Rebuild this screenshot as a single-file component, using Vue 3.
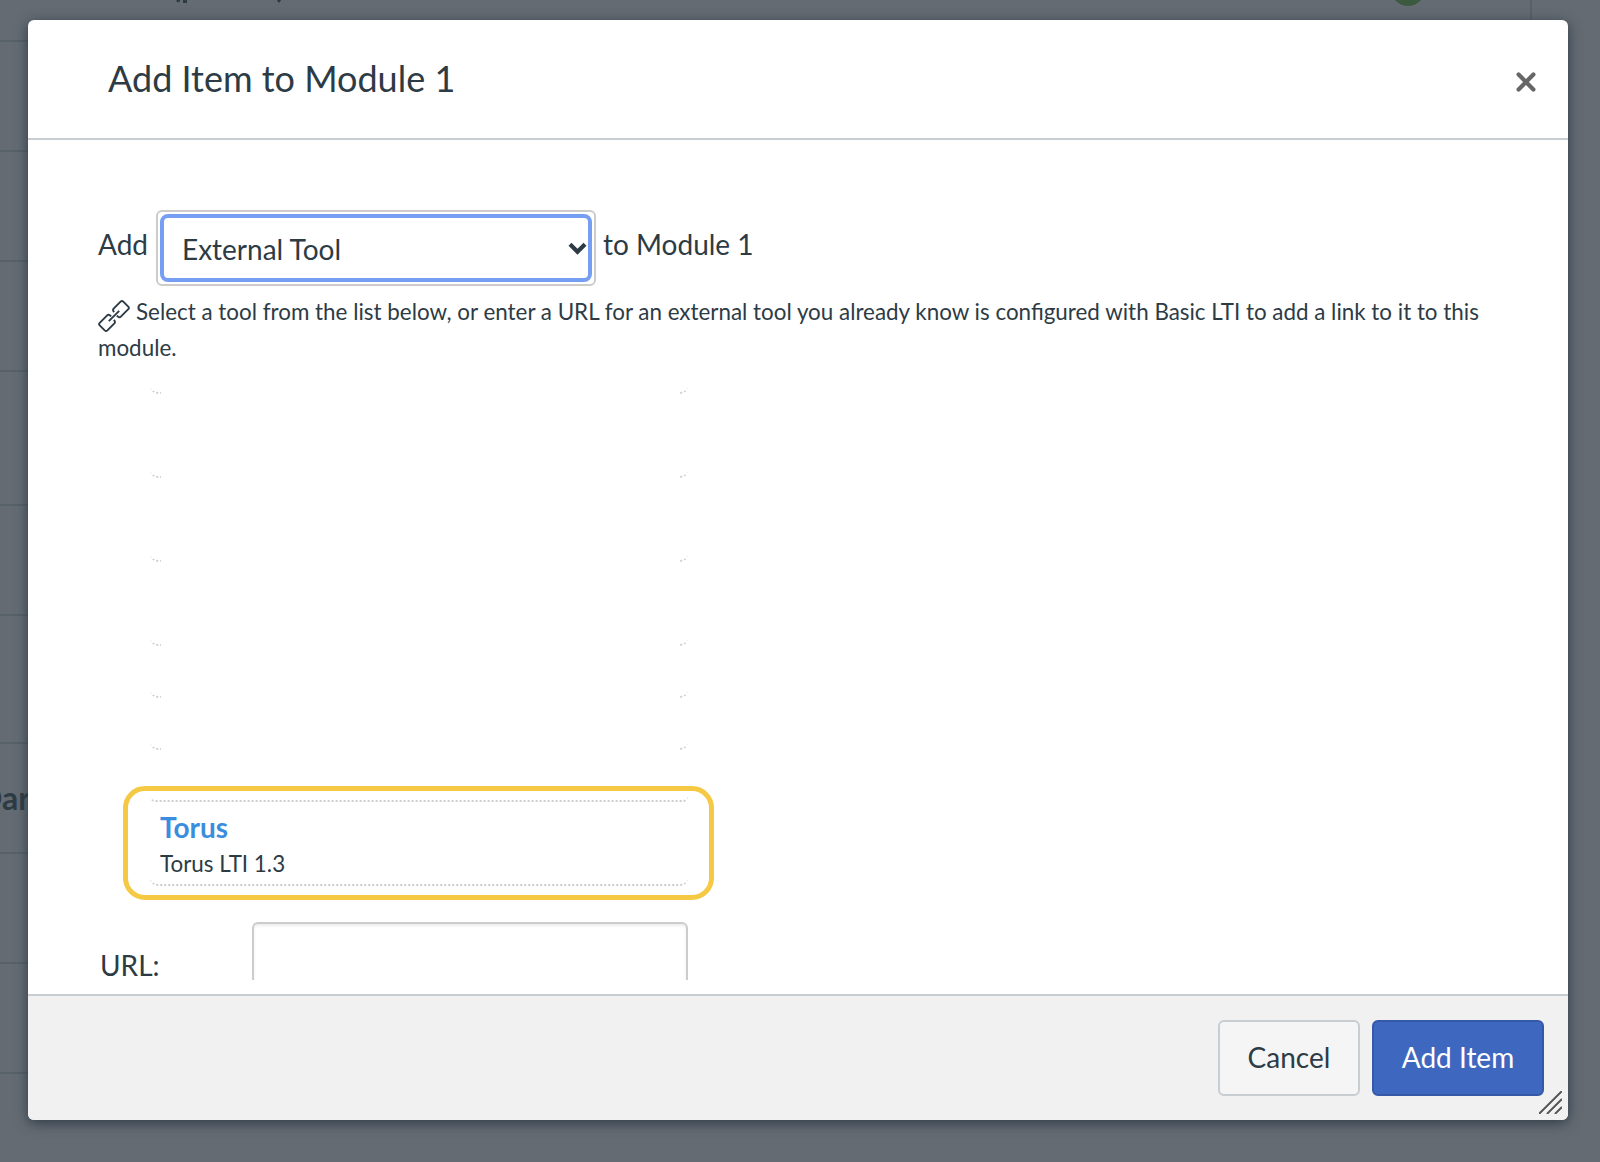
<script setup>
const courseRows = [
  { height: 42, marks: true },
  { height: 110 },
  { height: 110 },
  { height: 110 },
  { height: 134 },
  { height: 110 },
  { height: 128 },
  { height: 110, label: 'Dar' },
  { height: 110 },
  { height: 110 },
]
const emptyTools = [28, 84, 84, 84, 52, 52]
</script>

<template>
  <div class="page">
    <div class="course">
      <div v-for="(row, i) in courseRows" :key="i" class="course-row" :style="{ height: row.height + 'px' }">
        <span v-if="row.label" class="course-label">{{ row.label }}</span>
        <svg v-if="row.marks" class="marks" width="1600" height="20" viewBox="0 0 1600 20">
          <path d="M176.500 0h3.500v1.500q-2 1.500-3.500 0zM183 0h4v3h-4zM277 0h4l-1 2q-1 1-2 0z" fill="#2d3b45" />
          <circle cx="1408" cy="-11" r="17" fill="#3b5a40" />
          <path d="M1531 0v20" stroke="#566168" stroke-width="2" />
        </svg>
      </div>
    </div>

    <div class="overlay">
      <section class="dialog" role="dialog" aria-label="Add Item to Module 1">
        <header class="head">
          <h1>Add Item to Module 1</h1>
          <button class="close" aria-label="Close">
            <svg width="20" height="20" viewBox="0 0 20 20"><path d="M2.600 2.600 17.400 17.400M17.400 2.600 2.600 17.400" stroke="#666" stroke-width="4.200" stroke-linecap="round" /></svg>
          </button>
        </header>

        <div class="body">
          <div class="picker">
            <span class="before">Add</span>
            <div class="select">
              <div class="ring">
                <span>External Tool</span>
                <svg width="20" height="14" viewBox="0 0 20 14"><path d="M2 2.300l7.500 7.400L17 2.300" fill="none" stroke="#2d3b45" stroke-width="4.200" /></svg>
              </div>
            </div>
            <span class="after">to Module 1</span>
          </div>

          <p class="hint">
            <svg class="link" width="32" height="32" viewBox="0 0 32 32" fill="none" stroke="#2d3b45" stroke-width="1.900" stroke-linejoin="round">
              <path d="M18.800 15.600l1.400 1.200q1.300 1 2.600-.1l7.500-7.500q1.200-1.300 0-2.600L25.300 1.600q-1.400-1.200-2.700 0l-7 7q-1 1.200-.2 2.500l.7 1" />
              <path d="M13.200 16.400l-1.400-1.200q-1.300-1-2.600.1l-7.500 7.500q-1.200 1.300 0 2.600l5 5q1.400 1.200 2.700 0l7-7q1-1.200.2-2.500l-.7-1" />
              <path d="M10.800 21.200l10.400-10.400" />
            </svg><span>Select a tool from the list below, or enter a URL for an external tool you already know is configured with Basic LTI to add a link to it to this module.</span>
          </p>

          <ul class="tools">
            <li v-for="(h, i) in emptyTools" :key="i" class="tool empty" :style="{ height: h + 'px' }"></li>
            <li class="featured">
              <div class="tool edge"></div>
              <div class="tool torus">
                <a>Torus</a>
                <span>Torus LTI 1.3</span>
              </div>
            </li>
          </ul>

          <div class="url">
            <label for="url">URL:</label>
            <input id="url" type="text" />
          </div>
        </div>

        <footer class="foot">
          <button class="btn">Cancel</button>
          <button class="btn primary">Add Item</button>
          <svg class="grip" width="23" height="23" viewBox="0 0 23 23" stroke="#fff" stroke-width="1.500">
            <path d="M1 23.500 23.500 1M9 23.500 23.500 9M17 23.500 23.500 17" />
            <path d="M0 23 23 0M8 23 23 8M16 23 23 16" stroke="#555" stroke-width="2" />
          </svg>
        </footer>
      </section>
    </div>
  </div>
</template>

<style>
body { margin: 0; overflow: hidden; }
</style>

<style scoped>
* { box-sizing: border-box; }
.page {
  position: relative;
  width: 1600px;
  height: 1162px;
  overflow: hidden;
  background: #646b73;
  color: #2d3b45;
  font-family: Lato, sans-serif;
}
.course-row {
  display: flex;
  align-items: center;
  width: 1532px;
  border-bottom: 2px solid #566168;
}
.course-label {
  margin: -2px 0 0 -22px;
  font-size: 32px;
  font-weight: 700;
}
.marks {
  flex: none;
  align-self: flex-start;
}
.overlay {
  position: absolute;
  inset: 0;
  padding: 20px 32px 42px 28px;
}
.dialog {
  position: relative;
  display: flex;
  flex-direction: column;
  height: 1100px;
  border-radius: 6px;
  background: #fff;
  box-shadow: 0 3px 13px #2d3b45;
}
.head {
  display: flex;
  justify-content: space-between;
  height: 120px;
  padding: 35px 32px 0 80px;
  border-bottom: 2px solid #c7cdd1;
}
h1 {
  margin: 0;
  font-size: 36px;
  line-height: 46px;
  font-weight: 400;
}
.close {
  height: 20px;
  margin-top: 17px;
  padding: 0;
  border: 0;
  background: none;
}
.close svg { display: block; }
.body {
  height: 840px;
  padding: 70px 70px 0;
  overflow: hidden;
}
.picker {
  display: flex;
  height: 76px;
  font-size: 28px;
  line-height: 68px;
}
.before { width: 58px; }
.select {
  width: 440px;
  height: 76px;
  padding: 2px;
  border: 2px solid #ccc;
  border-radius: 6px;
}
.ring {
  display: flex;
  align-items: center;
  justify-content: space-between;
  height: 68px;
  padding: 1px 0 0 18px;
  border: 4px solid #769ef3;
  border-radius: 8px;
}
.after { margin-left: 7px; }
.hint {
  height: 72px;
  margin: 8px 0 0;
  font-size: 22.400px;
  line-height: 36px;
}
.link {
  float: left;
  height: 32px;
  margin: 6px 6px -12px 0;
}
.tools {
  width: 538px;
  margin: 0 0 0 52px;
  padding: 0;
  list-style: none;
}
.tool {
  border-bottom: 2px dotted #ccc;
  border-radius: 8px;
}
.empty {
  -webkit-mask-image: linear-gradient(90deg, #000 11px, transparent 11px 530px, #000 530px);
  mask-image: linear-gradient(90deg, #000 11px, transparent 11px 530px, #000 530px);
}
.featured {
  width: 591px;
  height: 114px;
  margin: 36px 0 0 -27px;
  padding: 0 21px 0 22px;
  border: 5px solid #f5c944;
  border-radius: 22px;
}
.edge { height: 11px; }
.torus {
  display: flex;
  flex-direction: column;
  height: 84px;
  padding: 6px 10px 0;
}
.torus a {
  color: #3b8dde;
  font-size: 28px;
  line-height: 38px;
  font-weight: 700;
}
.torus span {
  margin-top: 1px;
  font-size: 22.400px;
  line-height: 34px;
}
.url {
  display: flex;
  margin: 22px 0 0 2px;
  font-size: 28px;
}
label { width: 152px; padding-top: 26px; line-height: 34px; }
input {
  width: 436px;
  height: 76px;
  border: 2px solid #ccc;
  border-radius: 6px;
  box-shadow: inset 0 2px 3px rgba(0, 0, 0, .075);
}
.foot {
  display: flex;
  justify-content: flex-end;
  gap: 12px;
  height: 126px;
  margin-top: 14px;
  padding: 24px 24px 0;
  border-top: 2px solid #c7cdd1;
  border-radius: 0 0 6px 6px;
  background: #f1f1f1;
}
.btn {
  width: 142px;
  height: 76px;
  padding: 0 0 2px;
  border: 2px solid #c7cdd1;
  border-radius: 6px;
  background: #f5f5f5;
  color: #2d3b45;
  font: 400 28px Lato, sans-serif;
}
.primary {
  width: 172px;
  border-color: #3459a6;
  background: #3e68bf;
  color: #fff;
}
.grip {
  position: absolute;
  right: 6px;
  bottom: 6px;
}
</style>
